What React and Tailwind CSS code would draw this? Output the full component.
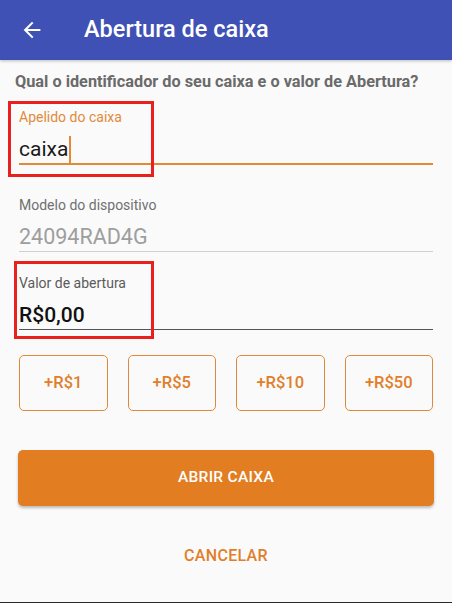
import React from "react";

export default function App() {
  return (
    <div
      className="relative h-[603px] w-[452px] overflow-hidden bg-[#fafafa] border-b border-[#2a2a2a]"
      style={{ fontFamily: "Roboto, 'Noto Sans', sans-serif" }}
    >
      <header className="flex h-[60px] items-center bg-[#3f51b5] shadow-[0_1px_3px_rgba(0,0,0,0.25)]">
        <svg className="ml-[21px]" width="22" height="22" viewBox="0 0 24 24" fill="none">
          <path d="M20 12H5M12 4.5L4.5 12L12 19.5" stroke="white" strokeWidth="2.3" strokeLinecap="square" />
        </svg>
        <h1 className="ml-[41px] text-[23.5px] font-medium leading-none text-white">Abertura de caixa</h1>
      </header>

      <div className="px-[19px]">
        <p className="-ml-[4px] mt-[12px] whitespace-nowrap text-[16.3px] font-bold leading-[20px] text-[#6a6a6a]">
          Qual o identificador do seu caixa e o valor de Abertura?
        </p>

        <div className="mt-[17px]">
          <div className="h-4 text-[14px] leading-4 text-[#e08a3c]">Apelido do caixa</div>
          <div className="mt-[10px] flex h-[30px] items-center border-b-2 border-[#e38a35] text-[21px] leading-[28px] text-[#1a1a1a]">
            <span>caixa</span>
            <span className="ml-[1px] inline-block h-[27px] w-[2px] bg-[#e38a35]"></span>
          </div>
        </div>

        <div className="mt-[32px]">
          <div className="h-4 text-[14px] leading-4 text-[#707070]">Modelo do dispositivo</div>
          <div className="mt-[10px] h-[29px] border-b border-[#cfcfcf] text-[21.5px] leading-[28px] text-[#9e9e9e]">24094RAD4G</div>
        </div>

        <div className="mt-[23px]">
          <div className="h-4 text-[14px] leading-4 text-[#5a5a5a]">Valor de abertura</div>
          <div className="mt-[10px] h-[29px] border-b border-[#555555] text-[21px] font-medium leading-[28px] text-[#111111]">R$0,00</div>
        </div>

        <div className="mt-[25px] grid grid-cols-4 gap-[20px]">
          {["+R$1", "+R$5", "+R$10", "+R$50"].map((t) => (
            <button
              key={t}
              className="flex h-[56px] items-center justify-center rounded-[5px] border border-[#e0893a] text-[16.5px] font-medium text-[#e07f2a]"
            >
              {t}
            </button>
          ))}
        </div>
      </div>

      <div className="px-[18px]">
        <button className="mt-[39px] flex h-[56px] w-full items-center justify-center rounded-[5px] bg-[#e27d22] text-[15.5px] font-medium tracking-[0.3px] text-white shadow-[0_2px_3px_rgba(0,0,0,0.25)]">
          ABRIR CAIXA
        </button>
        <div className="mt-[40px] flex h-[20px] items-center justify-center text-[16px] font-medium tracking-[0.3px] text-[#e07f2a]">
          CANCELAR
        </div>
      </div>

      <div className="pointer-events-none absolute left-[8px] top-[101px] h-[76px] w-[146px] border-[3px] border-[#e8211f]"></div>
      <div className="pointer-events-none absolute left-[14px] top-[261px] h-[78px] w-[140px] border-[3px] border-[#e8211f]"></div>
    </div>
  );
}
